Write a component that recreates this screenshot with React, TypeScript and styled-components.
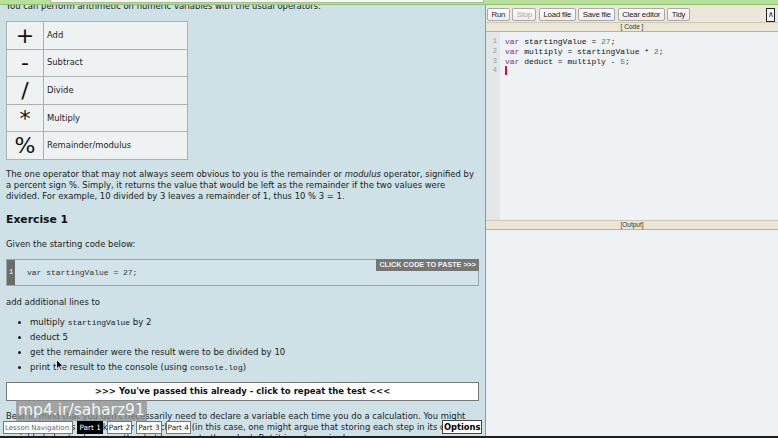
import React from 'react';
import styled, { createGlobalStyle } from 'styled-components';

const GlobalStyle = createGlobalStyle`
  html, body {
    margin: 0;
    padding: 0;
    overflow: hidden;
  }
`;

const Screen = styled.div`
  position: relative;
  width: 778px;
  height: 438px;
  overflow: hidden;
  display: flex;
  flex-direction: column;
  background: #cde1e6;
`;

const Main = styled.div`
  flex: 1;
  display: flex;
  min-height: 0;
`;

const BottomEdge = styled.div`
  height: 2px;
  background: #1e1e1e;
`;

/* top browser-ish strip, sits over the page */
const TopBar = styled.div`
  position: absolute;
  top: 0;
  left: 0;
  right: 0;
  height: 4px;
  background: #b9e09a;
  border-bottom: 1px solid #8cc46a;
  z-index: 3;
`;

const SearchStrip = styled.div`
  position: absolute;
  top: 0;
  left: 50px;
  width: 432px;
  height: 2px;
  background: #f6f8f2;
  border: 1px solid #a8b8a0;
  border-top: none;
`;

const Lesson = styled.div`
  width: 485px;
  flex-shrink: 0;
  padding: 1px 5px 0 6px;
  box-sizing: border-box;
  overflow: hidden;
  font-family: 'DejaVu Sans', Verdana, sans-serif;
  font-size: 8.45px;
  line-height: 11px;
  color: #1c1c1c;
`;

const Para = styled.p<{ $top?: number }>`
  margin: ${(p) => p.$top ?? 0}px 0 0;
`;

const OpTable = styled.table`
  margin-top: 9px;
  border-collapse: collapse;
  background: #eef2f3;
  width: 182px;
`;

const OpCell = styled.td`
  border: 1px solid #a9b1b3;
  height: 26.6px;
  padding: 0;
`;

const SymbolCell = styled(OpCell)`
  width: 36px;
  text-align: center;
  font-size: 22px;
  line-height: 21px;
  color: #111;
`;

const LabelCell = styled(OpCell)`
  padding-left: 3px;
  font-size: 8.4px;
`;

const Heading = styled.h3`
  margin: 10px 0 0;
  font-size: 10.8px;
  line-height: 16px;
  font-weight: bold;
  color: #111;
`;

const CodeBox = styled.div`
  position: relative;
  margin-top: 9.5px;
  margin-right: 1px;
  height: 25px;
  display: flex;
  border: 1px solid #9aa6aa;
  background: #d2e4e9;
`;

const CodeGutter = styled.div`
  width: 8px;
  background: #6c6c6c;
  color: #fff;
  font-family: 'Liberation Mono', monospace;
  font-size: 7px;
  display: flex;
  align-items: center;
  justify-content: center;
`;

const CodeLine = styled.code`
  padding-left: 12px;
  display: flex;
  align-items: center;
  font-family: 'Liberation Mono', monospace;
  font-size: 8px;
  color: #333;
  white-space: pre;
`;

const PasteTag = styled.div`
  position: absolute;
  top: -1px;
  right: -1px;
  background: #767676;
  color: #f2f2f2;
  font-family: 'Liberation Sans', Arial, sans-serif;
  font-weight: bold;
  font-size: 7.2px;
  line-height: 12px;
  padding: 0 3px;
`;

const Tasks = styled.ul`
  margin: 7px 0 0;
  padding-left: 24px;
  line-height: 15px;
  font-size: 8.6px;
`;

const Mono = styled.code`
  font-family: 'Liberation Mono', monospace;
  font-size: 8px;
`;

const RepeatButton = styled.div`
  margin-top: 7.5px;
  margin-right: 1px;
  height: 17px;
  border: 1px solid #777;
  background: #fff;
  display: flex;
  align-items: center;
  justify-content: center;
  font-weight: bold;
  font-size: 8.5px;
  color: #111;
`;

/* right: editor */
const Workbench = styled.div`
  flex: 1;
  display: flex;
  flex-direction: column;
  border-left: 1px solid #8e9aa0;
  background: #eef2f4;
`;

const Toolbar = styled.div`
  height: 17px;
  margin-top: 5px;
  padding: 3px 2px 0 1px;
  box-sizing: border-box;
  display: flex;
  align-items: flex-start;
  gap: 2.5px;
  background: #ebe7da;
`;

const ToolButton = styled.button<{ $disabled?: boolean }>`
  height: 13px;
  padding: 0 3.5px;
  margin: 0;
  border: 1px solid #a9a9a9;
  border-radius: 2px;
  background: linear-gradient(#ffffff, #ececec);
  font-family: 'Liberation Sans', Arial, sans-serif;
  font-size: 7.8px;
  line-height: 11px;
  letter-spacing: -0.2px;
  color: ${(p) => (p.$disabled ? '#a8a8a8' : '#222')};
`;

const CollapseButton = styled(ToolButton)`
  margin-left: auto;
  margin-right: 1px;
  padding: 0;
  width: 9px;
  height: 14px;
  border: 1px solid #222;
  border-radius: 0;
  background: #f4f4f4;
  font-size: 8px;
  line-height: 12px;
  letter-spacing: 0;
`;

const PaneLabel = styled.div`
  height: 10px;
  background: #ebe6d6;
  border-top: 1px solid #cfc8b2;
  border-bottom: 1px solid #b9b3a0;
  box-sizing: border-box;
  text-align: center;
  font-family: 'Liberation Sans', Arial, sans-serif;
  font-size: 6.5px;
  line-height: 8px;
  color: #333;
`;

const Editor = styled.div`
  height: 188px;
  display: flex;
`;

const LineNumbers = styled.div`
  width: 14px;
  padding-top: 5px;
  padding-right: 3px;
  box-sizing: border-box;
  background: #e3e7ea;
  text-align: right;
  font-family: 'Liberation Mono', monospace;
  font-size: 7px;
  line-height: 9.8px;
  color: #9a9a9a;
`;

const Lines = styled.div`
  padding: 5px 0 0 5px;
  font-family: 'Liberation Mono', monospace;
  font-size: 8px;
  line-height: 9.8px;
  color: #111;
  white-space: pre;
`;

const Kw = styled.span`
  color: #7b2c97;
`;

const Num = styled.span`
  color: #2d8f2d;
`;

const Caret = styled.span`
  display: inline-block;
  width: 2px;
  height: 9px;
  vertical-align: -1px;
  background: #c2183a;
`;

const Output = styled.div`
  flex: 1;
  background: #eef2f4;
`;

/* overlays at the bottom */
const NavStrip = styled.div`
  position: absolute;
  left: 3px;
  bottom: 4px;
  display: flex;
  align-items: center;
  gap: 4px;
  z-index: 2;
`;

const NavBox = styled.span<{ $active?: boolean; $muted?: boolean }>`
  height: 13px;
  padding: 0 1px;
  border: 1px solid ${(p) => (p.$active ? '#000' : '#777')};
  background: ${(p) => (p.$active ? '#000' : '#fff')};
  color: ${(p) => (p.$active ? '#fff' : p.$muted ? '#666' : '#222')};
  font-family: 'DejaVu Sans', Verdana, sans-serif;
  font-size: ${(p) => (p.$muted ? 7 : 7.3)}px;
  line-height: 12px;
  box-sizing: border-box;
  white-space: nowrap;
`;

const OptionsBox = styled.span`
  position: absolute;
  left: 442px;
  bottom: 4px;
  height: 14px;
  padding: 0 1px;
  border: 1px solid #444;
  background: #fff;
  font-family: 'DejaVu Sans', Verdana, sans-serif;
  font-weight: bold;
  font-size: 8.3px;
  line-height: 12px;
  box-sizing: border-box;
  z-index: 2;
`;

const Watermark = styled.div`
  position: absolute;
  left: 16px;
  top: 400px;
  padding: 0 2px;
  height: 21px;
  background: rgba(140, 140, 140, 0.72);
  color: #f4f4f4;
  font-family: 'DejaVu Sans', sans-serif;
  font-size: 15.5px;
  line-height: 21px;
  z-index: 2;
`;

const Pointer = styled.svg`
  position: absolute;
  left: 56px;
  top: 359px;
  z-index: 2;
`;

const operators = [
  { sym: '+', label: 'Add' },
  { sym: '-', label: 'Subtract' },
  { sym: '/', label: 'Divide' },
  { sym: '*', label: 'Multiply' },
  { sym: '%', label: 'Remainder/modulus' },
];

const App = () => {
  return (
    <Screen>
      <GlobalStyle />
      <TopBar>
        <SearchStrip />
      </TopBar>
      <Main>
        <Lesson>
          <Para>You can perform arithmetic on numeric variables with the usual operators:</Para>
          <OpTable>
            <tbody>
              {operators.map((op) => (
                <tr key={op.label}>
                  <SymbolCell>{op.sym}</SymbolCell>
                  <LabelCell>{op.label}</LabelCell>
                </tr>
              ))}
            </tbody>
          </OpTable>
          <Para $top={9.5}>
            The one operator that may not always seem obvious to you is the remainder or <i>modulus</i> operator, signified by
            <br />
            a percent sign %. Simply, it returns the value that would be left as the remainder if the two values were
            <br />
            divided. For example, 10 divided by 3 leaves a remainder of 1, thus 10 % 3 = 1.
          </Para>
          <Heading>Exercise 1</Heading>
          <Para $top={10.5}>Given the starting code below:</Para>
          <CodeBox>
            <CodeGutter>1</CodeGutter>
            <CodeLine>var startingValue = 27;</CodeLine>
            <PasteTag>CLICK CODE TO PASTE &gt;&gt;&gt;</PasteTag>
          </CodeBox>
          <Para $top={10.5}>add additional lines to</Para>
          <Tasks>
            <li>
              multiply <Mono>startingValue</Mono> by 2
            </li>
            <li>deduct 5</li>
            <li>get the remainder were the result were to be divided by 10</li>
            <li>
              print the result to the console (using <Mono>console.log</Mono>)
            </li>
          </Tasks>
          <RepeatButton>&gt;&gt;&gt; You've passed this already - click to repeat the test &lt;&lt;&lt;</RepeatButton>
          <Para $top={9.5}>
            Bear in mind that you don't necessarily need to declare a variable each time you do a calculation. You might
            <br />
            find that it helps to make your code clearer (in this case, one might argue that storing each step in its own
            variable helps to show exactly what happens to the value). But it is not required.
          </Para>
        </Lesson>
        <Workbench>
          <Toolbar>
            <ToolButton>Run</ToolButton>
            <ToolButton $disabled>Stop</ToolButton>
            <ToolButton>Load file</ToolButton>
            <ToolButton>Save file</ToolButton>
            <ToolButton>Clear editor</ToolButton>
            <ToolButton>Tidy</ToolButton>
            <CollapseButton>&#8743;</CollapseButton>
          </Toolbar>
          <PaneLabel>[ Code ]</PaneLabel>
          <Editor>
            <LineNumbers>
              <div>1</div>
              <div>2</div>
              <div>3</div>
              <div>4</div>
            </LineNumbers>
            <Lines>
              <div>
                <Kw>var</Kw> startingValue = <Num>27</Num>;
              </div>
              <div>
                <Kw>var</Kw> multiply = startingValue * <Num>2</Num>;
              </div>
              <div>
                <Kw>var</Kw> deduct = multiply - <Num>5</Num>;
              </div>
              <div>
                <Caret />
              </div>
            </Lines>
          </Editor>
          <PaneLabel>[Output]</PaneLabel>
          <Output />
        </Workbench>
      </Main>
      <BottomEdge />
      <Watermark>mp4.ir/saharz91</Watermark>
      <NavStrip>
        <NavBox $muted>Lesson Navigation:</NavBox>
        <NavBox $active>Part 1</NavBox>
        <NavBox>Part 2</NavBox>
        <NavBox>Part 3</NavBox>
        <NavBox>Part 4</NavBox>
      </NavStrip>
      <OptionsBox>Options</OptionsBox>
      <Pointer width="8" height="12" viewBox="0 0 8 12">
        <path d="M0.5 0.5 L0.5 10 L2.8 7.8 L4.4 11.3 L5.8 10.7 L4.3 7.3 L7.4 7.3 Z" fill="#111" stroke="#fff" strokeWidth="0.8" />
      </Pointer>
    </Screen>
  );
};

export default App;
